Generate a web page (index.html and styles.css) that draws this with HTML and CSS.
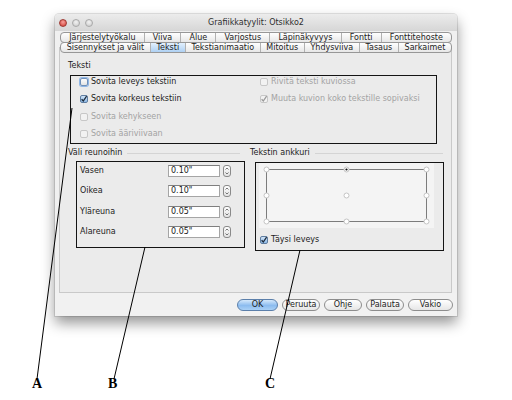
FILE: index.html
```html
<!DOCTYPE html>
<html lang="fi">
<head>
<meta charset="utf-8">
<title>Grafiikkatyylit</title>
<link rel="stylesheet" href="styles.css">
</head>
<body>
<div class="stage">
  <div class="window">
    <div class="titlebar">
      <div class="lights"><span class="light red"></span><span class="light"></span><span class="light"></span></div>
      <div class="title">Grafiikkatyylit: Otsikko2</div>
      <div></div>
    </div>
    <div class="tabs">
      <div class="tabrow">
        <div class="tab">Järjestelytyökalu</div>
        <div class="tab">Viiva</div>
        <div class="tab">Alue</div>
        <div class="tab">Varjostus</div>
        <div class="tab">Läpinäkyvyys</div>
        <div class="tab">Fontti</div>
        <div class="tab">Fonttitehoste</div>
      </div>
      <div class="tabrow">
        <div class="tab">Sisennykset ja välit</div>
        <div class="tab sel">Teksti</div>
        <div class="tab">Tekstianimaatio</div>
        <div class="tab">Mitoitus</div>
        <div class="tab">Yhdysviiva</div>
        <div class="tab">Tasaus</div>
        <div class="tab">Sarkaimet</div>
      </div>
    </div>
    <div class="panel">
      <div class="section-title">Teksti</div>
      <div class="box1">
        <div class="check"><span class="cb focus"></span>Sovita leveys tekstiin</div>
        <div class="check"><span class="cb on"><svg viewBox="0 0 8 8"><path d="M1.6 4.2 L3.3 6 L6.6 1.2"/></svg></span>Sovita korkeus tekstiin</div>
        <div class="check dis"><span class="cb"></span>Sovita kehykseen</div>
        <div class="check dis"><span class="cb"></span>Sovita ääriviivaan</div>
        <div class="check dis"><span class="cb"></span>Rivitä teksti kuviossa</div>
        <div class="check dis"><span class="cb on"><svg viewBox="0 0 8 8"><path d="M1.6 4.2 L3.3 6 L6.6 1.2"/></svg></span>Muuta kuvion koko tekstille sopivaksi</div>
      </div>
      <div class="lower">
        <div class="col-left">
          <div class="header hl"><span>Väli reunoihin</span><span class="rule"></span></div>
          <div class="boxb">
            <div class="lbl">Vasen</div><div class="field">0.10"</div><div class="stepper"><svg viewBox="0 0 8 12"><path d="M2.5 4.5 L4 3 L5.5 4.5 M2.5 7.5 L4 9 L5.5 7.5"/></svg></div>
            <div class="lbl">Oikea</div><div class="field">0.10"</div><div class="stepper"><svg viewBox="0 0 8 12"><path d="M2.5 4.5 L4 3 L5.5 4.5 M2.5 7.5 L4 9 L5.5 7.5"/></svg></div>
            <div class="lbl">Yläreuna</div><div class="field">0.05"</div><div class="stepper"><svg viewBox="0 0 8 12"><path d="M2.5 4.5 L4 3 L5.5 4.5 M2.5 7.5 L4 9 L5.5 7.5"/></svg></div>
            <div class="lbl">Alareuna</div><div class="field">0.05"</div><div class="stepper"><svg viewBox="0 0 8 12"><path d="M2.5 4.5 L4 3 L5.5 4.5 M2.5 7.5 L4 9 L5.5 7.5"/></svg></div>
          </div>
        </div>
        <div class="col-right">
          <div class="header hr"><span>Tekstin ankkuri</span><span class="rule"></span></div>
          <div class="boxc">
            <div class="anchor">
              <svg width="175" height="65" viewBox="0 0 175 65">
                <rect x="7.5" y="6.5" width="160" height="52" fill="none" stroke="#7c7c7c"/>
                <g fill="#fff" stroke="#c4c4c4">
                  <circle cx="7.5" cy="6.5" r="2.5"/><circle cx="87.5" cy="6.5" r="2.5"/><circle cx="167.5" cy="6.5" r="2.5"/>
                  <circle cx="7.5" cy="32.5" r="2.5"/><circle cx="87.5" cy="32.5" r="2.5"/><circle cx="167.5" cy="32.5" r="2.5"/>
                  <circle cx="7.5" cy="58.5" r="2.5"/><circle cx="87.5" cy="58.5" r="2.5"/><circle cx="167.5" cy="58.5" r="2.5"/>
                </g>
                <circle cx="87.5" cy="6.5" r="1.1" fill="#111"/>
              </svg>
            </div>
            <div class="check full"><span class="cb on"><svg viewBox="0 0 8 8"><path d="M1.6 4.2 L3.3 6 L6.6 1.2"/></svg></span>Täysi leveys</div>
          </div>
        </div>
      </div>
    </div>
    <div class="buttons">
      <div class="btn ok">OK</div>
      <div class="btn">Peruuta</div>
      <div class="btn">Ohje</div>
      <div class="btn">Palauta</div>
      <div class="btn wide">Vakio</div>
    </div>
  </div>
  <svg class="annot" width="512" height="400" viewBox="0 0 512 400">
    <g stroke="#000" stroke-width="1" fill="none">
      <line x1="72" y1="108" x2="37" y2="379"/>
      <line x1="145" y1="247" x2="114" y2="379"/>
      <line x1="300" y1="250" x2="270" y2="379"/>
    </g>
  </svg>
  <span class="mark mark-a">A</span>
  <span class="mark mark-b">B</span>
  <span class="mark mark-c">C</span>
</div>
</body>
</html>
```
FILE: styles.css
```css
* { box-sizing: border-box; margin: 0; padding: 0; }
html, body { width: 512px; height: 400px; background: #fff; overflow: hidden; }
body { font-family: "DejaVu Sans", "Noto Sans", sans-serif; font-size: 8px; line-height: 10px; color: #1c1c1c; }

.stage { position: relative; width: 512px; height: 400px; padding: 14px 0 0 55px; }

.window {
  width: 402px; height: 302px;
  background: #f0f0f0;
  border-radius: 4px 4px 0 0;
  box-shadow: 0 7px 14px rgba(0,0,0,.42), 0 0 0 1px rgba(0,0,0,.10);
  display: flex; flex-direction: column;
}

.titlebar {
  height: 17px;
  display: grid; grid-template-columns: 1fr auto 1fr; align-items: center;
  background: linear-gradient(#ececec, #d6d6d6);
  border-radius: 4px 4px 0 0;
}
.lights { display: flex; gap: 5px; padding-left: 4px; }
.light {
  width: 8px; height: 8px; border-radius: 50%;
  background: radial-gradient(circle at 50% 35%, #f2f2f2, #c9c9c9);
  border: 1px solid #a9a9a9;
}
.light.red { background: radial-gradient(circle at 50% 35%, #f7a09a, #cf3a32); border-color: #9e3a33; }
.title { color: #2e2e2e; font-size: 8px; }

.tabs { margin: 1px 0 0 5px; width: 392px; position: relative; z-index: 1; }
.tabrow {
  display: flex; height: 11px;
  border: 1px solid #979797; border-radius: 4px;
  background: linear-gradient(#fefefe, #e7e7e7);
  overflow: hidden;
}
.tabrow + .tabrow { margin-top: -1px; }
.tab {
  flex: 1 1 auto; text-align: center; white-space: nowrap;
  line-height: 9px; border-left: 1px solid #b1b1b1; color: #1c1c1c;
}
.tab:first-child { border-left: none; }
.tab.sel { background: linear-gradient(#e2f0fd, #aed0f3); }

.panel {
  flex: 1 1 auto;
  margin: -6px 5px 0 4px;
  background: #ebebeb;
  border: 1px solid #c9c9c9;
  padding: 13px 0 0 8px;
}
.section-title { height: 10px; }

.box1 {
  margin: 4px 0 0 2px;
  width: 367px; height: 69px;
  border: 1px solid #141414;
  display: grid;
  grid-template-columns: 180px 1fr;
  grid-template-rows: repeat(4, 12px);
  grid-auto-flow: column;
  row-gap: 5.33px;
  padding-left: 9px;
}

.check { display: flex; align-items: center; gap: 3px; white-space: nowrap; }
.check.dis { color: #a3a3a3; }
.cb {
  width: 8px; height: 8px; flex: none;
  border: 1px solid #8e8e8e; border-radius: 2px;
  background: linear-gradient(#fdfdfd, #e4e4e4);
  display: flex; align-items: center; justify-content: center;
}
.cb svg { width: 8px; height: 8px; margin: -1px; }
.cb svg path { fill: none; stroke: #1d2a3a; stroke-width: 1.3; }
.cb.on { background: linear-gradient(#cfe3f7, #8fbbe8); border-color: #5f7da0; }
.cb.focus { box-shadow: 0 0 0 1px #8fb6e6; border-color: #6f8fb8; }
.check.dis .cb { border-color: #c7c7c7; background: #f2f2f2; }
.check.dis .cb svg path { stroke: #9a9a9a; }

.lower { display: flex; margin-top: 4px; }
.col-left { width: 182px; }
.col-right { width: 195px; }
.header { display: flex; align-items: center; height: 10px; white-space: nowrap; }
.header.hl { width: 172px; }
.header.hr { width: 193px; }
.rule { flex: 1 1 auto; height: 1px; background: #d4d4d4; margin-left: 5px; }

.boxb {
  margin: 3px 0 0 8px;
  width: 169px; height: 87px;
  border: 1px solid #141414;
  padding: 3px 0 0 3px;
  display: grid;
  grid-template-columns: 85px 52px 8px;
  grid-template-rows: repeat(4, 12px);
  column-gap: 3px; row-gap: 8.33px;
  align-items: center;
}
.field {
  height: 12px; background: #fff;
  border: 1px solid #a5a5a5; border-top-color: #7f7f7f;
  padding-left: 2px; line-height: 10px;
}
.stepper {
  height: 12px; width: 8px;
  border: 1px solid #8a8a8a; border-radius: 3px;
  background: linear-gradient(#fdfdfd, #e2e2e2);
  display: flex;
}
.stepper svg { width: 8px; height: 12px; margin: -1px; }
.stepper svg path { fill: none; stroke: #555; stroke-width: .8; }

.boxc {
  margin: 4px 0 0 5px;
  width: 189px; height: 89px;
  border: 1px solid #141414;
  padding-left: 3px;
}
.anchor { width: 175px; height: 65px; background: #f4f4f4; display: flex; }
.check.full { margin-top: 6px; height: 12px; padding-left: 1px; }

.buttons {
  height: 23px; flex: none;
  display: flex; justify-content: flex-end; align-items: flex-start;
  gap: 4px; padding: 6px 4px 0 0;
  background: #f1f1f1;
}
.btn {
  height: 12px; min-width: 38px; padding: 0 2px;
  border: 1px solid #8d8d8d; border-radius: 6px;
  background: linear-gradient(#ffffff, #e6e6e6);
  text-align: center; line-height: 10px; white-space: nowrap;
}
.btn.ok {
  min-width: 41px;
  background: linear-gradient(#d4e8fb, #8cbcef 55%, #a9d0f6);
  border-color: #5b7faa;
}
.btn.wide { min-width: 45px; }

.annot { position: absolute; left: 0; top: 0; pointer-events: none; }
.mark {
  position: absolute; top: 377px;
  font-family: "Liberation Serif", serif; font-weight: bold; font-size: 14px; line-height: 14px; color: #000;
}
.mark-a { left: 32px; }
.mark-b { left: 108px; }
.mark-c { left: 265px; }
```
